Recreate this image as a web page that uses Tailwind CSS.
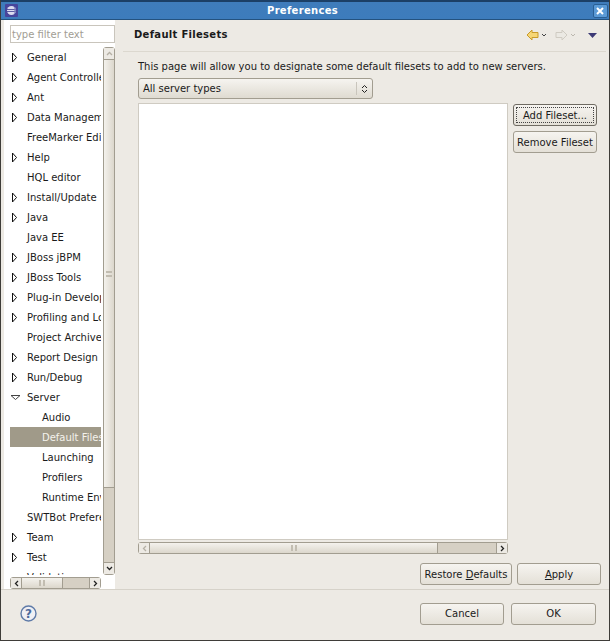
<!DOCTYPE html>
<html>
<head>
<meta charset="utf-8">
<script src="https://cdn.jsdelivr.net/npm/@tailwindcss/browser@4"></script>
</head>
<body class="bg-[#edeae4]">
<div class="w-[610px] h-[641px] flex flex-col overflow-hidden bg-[#edeae4] font-['DejaVu_Sans',sans-serif] text-[10px] text-[#1a1a1a] border-l border-r border-b border-[#3f3d39]">
  <!-- title bar -->
  <div class="h-[20px] shrink-0 flex items-center justify-between pl-[4px] pr-[1px] bg-gradient-to-b from-[#3f7cbb] to-[#3d7cbc] border-t-2 border-t-[#1c3f66] border-b border-b-[#24527f]">
    <svg width="13" height="13" viewBox="0 0 13 13"><rect width="13" height="13" rx="1" fill="#47459c"/><circle cx="6.500" cy="6.500" r="4.500" fill="#dcdcf0"/><path d="M2 5.300h9v.8H2zM2 7h9v.8H2z" fill="#35338a"/><path d="M6.500 2a4.500 4.500 0 0 1 0 9 2.800 3.400 0 0 0 2.800-4.500A2.800 3.400 0 0 0 6.500 2z" fill="#8180bf"/></svg>
    <span class="font-bold text-white tracking-[0.3px] mr-[6px]">Preferences</span>
    <div class="w-[15px] h-[14px] rounded-[2px] border border-[#2a5f95] bg-[#5b9ad6] flex items-center justify-center">
      <svg width="8" height="8" viewBox="0 0 8 8"><path d="M1 1l6 6M7 1L1 7" stroke="#fff" stroke-width="2"/></svg>
    </div>
  </div>
  <!-- main -->
  <div class="flex h-[569px] shrink-0">
    <!-- left panel -->
    <div class="w-[111px] ml-[3px] shrink-0 bg-white flex flex-col pl-[6px] pt-[5px]">
      <div class="w-[105px] h-[18px] border border-[#c9c5bc] flex items-center pl-[1px] text-[#a19d94] bg-white shrink-0">type filter text</div>
      <div class="flex mt-[4px] h-[528px]">
        <div class="w-[91px] mr-[2px] overflow-hidden">
          <div class="h-[528px] overflow-hidden">
            <div class="h-[20px] flex items-center whitespace-nowrap pl-[1px]"><svg width="7" height="11" viewBox="0 0 7 11" class="shrink-0 mr-[9px]"><path d="M1.500 1v9l4-4.500z" fill="#fff" stroke="#111" stroke-width="1"/></svg><span>General</span></div>
            <div class="h-[20px] flex items-center whitespace-nowrap pl-[1px]"><svg width="7" height="11" viewBox="0 0 7 11" class="shrink-0 mr-[9px]"><path d="M1.500 1v9l4-4.500z" fill="#fff" stroke="#111" stroke-width="1"/></svg><span>Agent Controller</span></div>
            <div class="h-[20px] flex items-center whitespace-nowrap pl-[1px]"><svg width="7" height="11" viewBox="0 0 7 11" class="shrink-0 mr-[9px]"><path d="M1.500 1v9l4-4.500z" fill="#fff" stroke="#111" stroke-width="1"/></svg><span>Ant</span></div>
            <div class="h-[20px] flex items-center whitespace-nowrap pl-[1px]"><svg width="7" height="11" viewBox="0 0 7 11" class="shrink-0 mr-[9px]"><path d="M1.500 1v9l4-4.500z" fill="#fff" stroke="#111" stroke-width="1"/></svg><span>Data Management</span></div>
            <div class="h-[20px] flex items-center whitespace-nowrap pl-[17px]">FreeMarker Editor</div>
            <div class="h-[20px] flex items-center whitespace-nowrap pl-[1px]"><svg width="7" height="11" viewBox="0 0 7 11" class="shrink-0 mr-[9px]"><path d="M1.500 1v9l4-4.500z" fill="#fff" stroke="#111" stroke-width="1"/></svg><span>Help</span></div>
            <div class="h-[20px] flex items-center whitespace-nowrap pl-[17px]">HQL editor</div>
            <div class="h-[20px] flex items-center whitespace-nowrap pl-[1px]"><svg width="7" height="11" viewBox="0 0 7 11" class="shrink-0 mr-[9px]"><path d="M1.500 1v9l4-4.500z" fill="#fff" stroke="#111" stroke-width="1"/></svg><span>Install/Update</span></div>
            <div class="h-[20px] flex items-center whitespace-nowrap pl-[1px]"><svg width="7" height="11" viewBox="0 0 7 11" class="shrink-0 mr-[9px]"><path d="M1.500 1v9l4-4.500z" fill="#fff" stroke="#111" stroke-width="1"/></svg><span>Java</span></div>
            <div class="h-[20px] flex items-center whitespace-nowrap pl-[17px]">Java EE</div>
            <div class="h-[20px] flex items-center whitespace-nowrap pl-[1px]"><svg width="7" height="11" viewBox="0 0 7 11" class="shrink-0 mr-[9px]"><path d="M1.500 1v9l4-4.500z" fill="#fff" stroke="#111" stroke-width="1"/></svg><span>JBoss jBPM</span></div>
            <div class="h-[20px] flex items-center whitespace-nowrap pl-[1px]"><svg width="7" height="11" viewBox="0 0 7 11" class="shrink-0 mr-[9px]"><path d="M1.500 1v9l4-4.500z" fill="#fff" stroke="#111" stroke-width="1"/></svg><span>JBoss Tools</span></div>
            <div class="h-[20px] flex items-center whitespace-nowrap pl-[1px]"><svg width="7" height="11" viewBox="0 0 7 11" class="shrink-0 mr-[9px]"><path d="M1.500 1v9l4-4.500z" fill="#fff" stroke="#111" stroke-width="1"/></svg><span>Plug-in Development</span></div>
            <div class="h-[20px] flex items-center whitespace-nowrap pl-[1px]"><svg width="7" height="11" viewBox="0 0 7 11" class="shrink-0 mr-[9px]"><path d="M1.500 1v9l4-4.500z" fill="#fff" stroke="#111" stroke-width="1"/></svg><span>Profiling and Logging</span></div>
            <div class="h-[20px] flex items-center whitespace-nowrap pl-[17px]">Project Archives</div>
            <div class="h-[20px] flex items-center whitespace-nowrap pl-[1px]"><svg width="7" height="11" viewBox="0 0 7 11" class="shrink-0 mr-[9px]"><path d="M1.500 1v9l4-4.500z" fill="#fff" stroke="#111" stroke-width="1"/></svg><span>Report Design</span></div>
            <div class="h-[20px] flex items-center whitespace-nowrap pl-[1px]"><svg width="7" height="11" viewBox="0 0 7 11" class="shrink-0 mr-[9px]"><path d="M1.500 1v9l4-4.500z" fill="#fff" stroke="#111" stroke-width="1"/></svg><span>Run/Debug</span></div>
            <div class="h-[20px] flex items-center whitespace-nowrap"><svg width="11" height="7" viewBox="0 0 11 7" class="shrink-0 mr-[6px]"><path d="M1 1.500h9l-4.500 4z" fill="#fff" stroke="#444" stroke-width="1"/></svg><span>Server</span></div>
            <div class="h-[20px] flex items-center whitespace-nowrap pl-[32px]">Audio</div>
            <div class="h-[20px] flex items-center whitespace-nowrap pl-[32px] bg-[#a09a89] text-[#f4f2ec]">Default Filesets</div>
            <div class="h-[20px] flex items-center whitespace-nowrap pl-[32px]">Launching</div>
            <div class="h-[20px] flex items-center whitespace-nowrap pl-[32px]">Profilers</div>
            <div class="h-[20px] flex items-center whitespace-nowrap pl-[32px]">Runtime Environments</div>
            <div class="h-[20px] flex items-center whitespace-nowrap pl-[17px]">SWTBot Preferences</div>
            <div class="h-[20px] flex items-center whitespace-nowrap pl-[1px]"><svg width="7" height="11" viewBox="0 0 7 11" class="shrink-0 mr-[9px]"><path d="M1.500 1v9l4-4.500z" fill="#fff" stroke="#111" stroke-width="1"/></svg><span>Team</span></div>
            <div class="h-[20px] flex items-center whitespace-nowrap pl-[1px]"><svg width="7" height="11" viewBox="0 0 7 11" class="shrink-0 mr-[9px]"><path d="M1.500 1v9l4-4.500z" fill="#fff" stroke="#111" stroke-width="1"/></svg><span>Test</span></div>
            <div class="h-[20px] flex items-center whitespace-nowrap pl-[17px]">Validation</div>
          </div>
        </div>
        <!-- vertical scrollbar -->
        <div class="w-[12px] h-[528px] shrink-0 flex flex-col bg-[#d6d0c4] border border-[#a29d90] rounded-[3px]">
          <div class="h-[12px] border-b border-[#a29d90] flex items-center justify-center bg-[#edeae4] shrink-0"><svg width="7" height="5" viewBox="0 0 7 5"><path d="M1 4l2.500-2.500L6 4" fill="none" stroke="#b5b0a5" stroke-width="1.300"/></svg></div>
          <div class="h-[428px] border-b border-[#a29d90] bg-gradient-to-r from-[#f4f2ed] to-[#dcd7cc] flex items-center justify-center shrink-0">
            <div class="w-[6px] h-[6px] border-y-2 border-[#c2bdb1]"></div>
          </div>
          <div class="flex-1"></div>
          <div class="h-[12px] border-t border-[#a29d90] flex items-center justify-center bg-[#edeae4] shrink-0"><svg width="7" height="5" viewBox="0 0 7 5"><path d="M1 1l2.500 2.500L6 1" fill="none" stroke="#222" stroke-width="1.300"/></svg></div>
        </div>
      </div>
      <!-- horizontal scrollbar -->
      <div class="w-[91px] h-[12px] mt-[2px] flex bg-[#d6d0c4] border border-[#a29d90] rounded-[3px] shrink-0">
        <div class="w-[11px] border-r border-[#a29d90] bg-[#edeae4] flex items-center justify-center shrink-0"><svg width="5" height="7" viewBox="0 0 5 7"><path d="M4 1L1.500 3.500 4 6" fill="none" stroke="#222" stroke-width="1.300"/></svg></div>
        <div class="w-[41px] border-r border-[#a29d90] bg-gradient-to-b from-[#f4f2ed] to-[#dcd7cc] flex items-center justify-center shrink-0">
          <div class="w-[6px] h-[6px] border-x-2 border-[#c2bdb1]"></div>
        </div>
        <div class="flex-1"></div>
        <div class="w-[11px] border-l border-[#a29d90] bg-[#edeae4] flex items-center justify-center shrink-0"><svg width="5" height="7" viewBox="0 0 5 7"><path d="M1 1l2.500 2.500L1 6" fill="none" stroke="#222" stroke-width="1.300"/></svg></div>
      </div>
    </div>
    <!-- sash -->
    <div class="w-[8px] shrink-0"></div>
    <!-- right panel -->
    <div class="flex-1 flex flex-col min-w-0 pr-[3px]">
      <div class="h-[32px] shrink-0 flex items-center justify-between border-b border-[#dcd8cf] pl-[11px] pr-[9px] pb-[3px]">
        <span class="font-bold tracking-[0.3px]">Default Filesets</span>
        <div class="flex items-center pt-[2px]">
          <svg width="13" height="12" viewBox="0 0 13 12"><path d="M6 1L1 6l5 5V8.500h6v-5H6z" fill="#f6d675" stroke="#c89a2a"/></svg>
          <svg width="6" height="4" viewBox="0 0 6 4" class="ml-[2px]"><path d="M1 1l2 2 2-2" fill="none" stroke="#444"/></svg>
          <svg width="13" height="12" viewBox="0 0 13 12" class="ml-[8px]"><path d="M7 1l5 5-5 5V8.500H1v-5h6z" fill="#ebe9e3" stroke="#cfcbc2"/></svg>
          <svg width="6" height="4" viewBox="0 0 6 4" class="ml-[2px]"><path d="M1 1l2 2 2-2" fill="none" stroke="#bbb7ae"/></svg>
          <svg width="9" height="5" viewBox="0 0 9 5" class="ml-[12px]"><path d="M0 0h9L4.500 5z" fill="#3c3a75"/></svg>
        </div>
      </div>
      <div class="flex-1 flex flex-col pl-[15px] pr-[5px] min-h-0">
        <div class="h-[14px] mt-[8px] leading-[14px] shrink-0 whitespace-nowrap">This page will allow you to designate some default filesets to add to new servers.</div>
        <div class="w-[235px] h-[21px] mt-[4px] shrink-0 rounded-[3px] border border-[#a29d90] bg-gradient-to-b from-[#f6f4f0] to-[#dfdbd1] flex items-center pl-[4px]">
          <span class="flex-1">All server types</span>
          <div class="w-px h-[13px] bg-[#c9c5bc]"></div>
          <svg width="7" height="10" viewBox="0 0 7 10" class="mx-[4px]"><path d="M1 4l2.500-2.500L6 4M1 6l2.500 2.500L6 6" fill="none" stroke="#222"/></svg>
        </div>
        <div class="flex mt-[4px] gap-[5px]">
          <div class="w-[370px] shrink-0 flex flex-col">
            <div class="h-[437px] bg-white border border-[#cfcbc2]"></div>
            <div class="h-[12px] mt-[2px] flex bg-[#d6d0c4] border border-[#a29d90] rounded-[3px]">
              <div class="w-[11px] border-r border-[#a29d90] bg-[#edeae4] flex items-center justify-center shrink-0"><svg width="5" height="7" viewBox="0 0 5 7"><path d="M4 1L1.500 3.500 4 6" fill="none" stroke="#b5b0a5" stroke-width="1.300"/></svg></div>
              <div class="w-[288px] border-r border-[#a29d90] bg-gradient-to-b from-[#f4f2ed] to-[#dcd7cc] flex items-center justify-center shrink-0">
                <div class="w-[6px] h-[6px] border-x-2 border-[#c2bdb1]"></div>
              </div>
              <div class="flex-1"></div>
              <div class="w-[11px] border-l border-[#a29d90] bg-[#edeae4] flex items-center justify-center shrink-0"><svg width="5" height="7" viewBox="0 0 5 7"><path d="M1 1l2.500 2.500L1 6" fill="none" stroke="#222" stroke-width="1.300"/></svg></div>
            </div>
          </div>
          <div class="flex flex-col gap-[5px] pt-[1px]">
            <div class="w-[84px] h-[22px] rounded-[3px] border border-[#6f6b62] bg-gradient-to-b from-[#f6f4f0] to-[#e4e0d7] flex items-center justify-center p-[2px]"><div class="w-full h-full border border-dotted border-[#444] flex items-center justify-center whitespace-nowrap">Add Fileset...</div></div>
            <div class="w-[84px] h-[22px] rounded-[3px] border border-[#a29d90] bg-gradient-to-b from-[#f6f4f0] to-[#e4e0d7] flex items-center justify-center whitespace-nowrap">Remove Fileset</div>
          </div>
        </div>
        <div class="flex justify-end gap-[5px] mt-[9px]">
          <div class="w-[92px] h-[22px] rounded-[3px] border border-[#a29d90] bg-gradient-to-b from-[#f6f4f0] to-[#e4e0d7] flex items-center justify-center whitespace-nowrap"><span>Restore <u>D</u>efaults</span></div>
          <div class="w-[84px] h-[22px] rounded-[3px] border border-[#a29d90] bg-gradient-to-b from-[#f6f4f0] to-[#e4e0d7] flex items-center justify-center"><span><u>A</u>pply</span></div>
        </div>
      </div>
    </div>
  </div>
  <!-- footer -->
  <div class="flex-1 border-t border-[#d6d2c9] flex items-center justify-between pl-[19px] pr-[13px] pb-[3px]">
    <svg width="17" height="17" viewBox="0 0 17 17"><circle cx="8.500" cy="8.500" r="7.500" fill="#f0f0f4" stroke="#5f7ba8" stroke-width="1.400"/><text x="8.500" y="13" text-anchor="middle" font-family="DejaVu Sans" font-weight="700" font-size="12" fill="#4d6a9c">?</text></svg>
    <div class="flex gap-[7px]">
      <div class="w-[84px] h-[22px] rounded-[3px] border border-[#a29d90] bg-gradient-to-b from-[#f6f4f0] to-[#e4e0d7] flex items-center justify-center">Cancel</div>
      <div class="w-[85px] h-[22px] rounded-[3px] border border-[#a29d90] bg-gradient-to-b from-[#f6f4f0] to-[#e4e0d7] flex items-center justify-center">OK</div>
    </div>
  </div>
</div>
</body>
</html>
